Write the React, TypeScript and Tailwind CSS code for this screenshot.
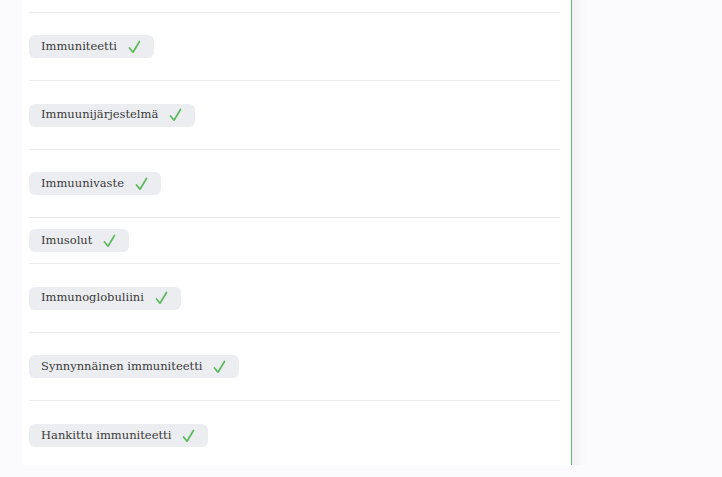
import React from "react";

interface Term {
	label: string;
	height: string;
}

const terms: Term[] = [
	{ label: "Immuniteetti", height: "h-[68px]" },
	{ label: "Immuunijärjestelmä", height: "h-[69px]" },
	{ label: "Immuunivaste", height: "h-[68px]" },
	{ label: "Imusolut", height: "h-[46px]" },
	{ label: "Immunoglobuliini", height: "h-[69px]" },
	{ label: "Synnynnäinen immuniteetti", height: "h-[68px]" },
];

const Check = () => (
	<svg width="13" height="14" viewBox="0 0 13 14" fill="none">
		<path
			d="M1.5 8 L5 12.2 L11.5 1.5"
			stroke="#5cb85c"
			strokeWidth="1.7"
			strokeLinecap="round"
			strokeLinejoin="round"
		/>
	</svg>
);

const Tag = ({ label }: { label: string }) => (
	<span
		className="h-[23px] flex items-center gap-[11px] pl-[12px] pr-[13px] rounded-[6px] bg-[#ecedf0] text-[11.5px] text-[#3a3a3a]"
		style={{ fontFamily: '"DejaVu Serif", serif' }}
	>
		{label}
		<Check />
	</span>
);

const App: React.FC = () => {
	return (
		<div className="w-[722px] h-[477px] overflow-hidden bg-[#fbfbfd] flex">
			<div className="w-[22px] shrink-0" />
			<div className="w-[550px] h-[465px] bg-white border-r border-[#6cb86c] pl-[7px] pr-[11px] flex flex-col">
				<div className="h-[13px] shrink-0 border-b border-[#ebebeb]" />
				{terms.map((term) => (
					<div
						key={term.label}
						className={`${term.height} shrink-0 flex items-center border-b border-[#ebebeb]`}
					>
						<Tag label={term.label} />
					</div>
				))}
				<div className="flex-1 flex items-start pt-[23px]">
					<Tag label="Hankittu immuniteetti" />
				</div>
			</div>
			<div className="w-[14px] h-[465px] bg-gradient-to-r from-[#f1f1f2] to-[#fbfbfd]" />
		</div>
	);
};

export default App;
